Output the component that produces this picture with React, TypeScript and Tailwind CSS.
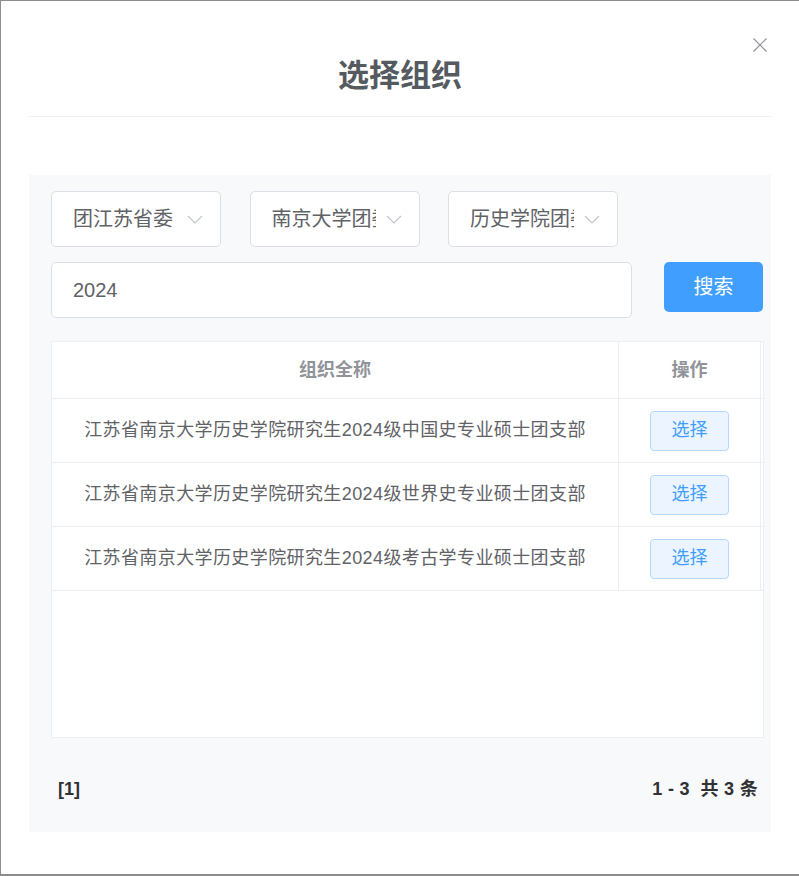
import React from "react";

const font = { fontFamily: '"Liberation Sans", "Noto Sans CJK SC", sans-serif' };

function Chevron() {
  return (
    <svg width="16" height="9" viewBox="0 0 16 9" className="shrink-0">
      <polyline points="1,1 8,8 15,1" fill="none" stroke="#c0c4cc" strokeWidth="1.1" />
    </svg>
  );
}

function Select({ label }: { label: string }) {
  return (
    <div className="w-[170px] h-[56px] bg-white border border-[#dcdfe6] rounded-[5px] flex items-center pl-[21px] pr-[17px]">
      <span className="w-[104px] overflow-hidden whitespace-nowrap text-[20px] text-[#606266] leading-[28px]">{label}</span>
      <span className="ml-auto flex items-center"><Chevron /></span>
    </div>
  );
}

const rows = [
  "江苏省南京大学历史学院研究生2024级中国史专业硕士团支部",
  "江苏省南京大学历史学院研究生2024级世界史专业硕士团支部",
  "江苏省南京大学历史学院研究生2024级考古学专业硕士团支部",
];

export default function App() {
  return (
    <div style={font} className="w-[799px] h-[876px] bg-white border-l border-t border-b-2 border-[#8c8c8c] relative flex flex-col">
      <button className="absolute left-[752px] top-[37px] w-[14px] h-[14px]">
        <svg width="14" height="14" viewBox="0 0 14 14">
          <line x1="0.5" y1="0.5" x2="13.5" y2="13.5" stroke="#909399" strokeWidth="1.2" />
          <line x1="13.5" y1="0.5" x2="0.5" y2="13.5" stroke="#909399" strokeWidth="1.2" />
        </svg>
      </button>
      <div className="pt-[52px] text-center">
        <h1 className="text-[31px] leading-[40px] font-bold text-[#555a60]" style={{ fontFamily: '"Noto Sans CJK SC", sans-serif' }}>选择组织</h1>
      </div>
      <div className="mx-[28px] mt-[23px] h-px bg-[#f0f1f3]" />
      <div className="mx-[28px] mt-[58px] h-[657px] bg-[#f8f9fb] pl-[22px] pr-[8px] pt-[16px]">
        <div className="flex gap-[28.5px]">
          <Select label="团江苏省委" />
          <Select label="南京大学团委" />
          <Select label="历史学院团委" />
        </div>
        <div className="mt-[15px] flex justify-between items-start">
          <div className="w-[581px] h-[56px] bg-white border border-[#dcdfe6] rounded-[5px] flex items-center pl-[21px] text-[20px] text-[#606266]">
            2024
          </div>
          <button className="w-[99px] h-[50px] bg-[#409eff] rounded-[5px] text-white text-[20px]">搜索</button>
        </div>
        <div className="mt-[23px] w-[713px] h-[397px] bg-white border border-[#ebeef5]">
          <div className="flex h-[57px] border-b border-[#ebeef5] text-[18px] font-bold text-[#909399]">
            <div className="w-[567px] border-r border-[#ebeef5] flex items-center justify-center">组织全称</div>
            <div className="w-[142px] border-r border-[#ebeef5] flex items-center justify-center">操作</div>
          </div>
          {rows.map((r) => (
            <div key={r} className="flex h-[64px] border-b border-[#ebeef5] text-[18px] text-[#606266]">
              <div className="w-[567px] border-r border-[#ebeef5] flex items-center justify-center tracking-[0.4px]">{r}</div>
              <div className="w-[142px] border-r border-[#ebeef5] flex items-center justify-center">
                <button className="w-[79px] h-[40px] bg-[#ecf5ff] border border-[#b3d8ff] rounded-[4px] text-[#409eff] text-[18px]">选择</button>
              </div>
            </div>
          ))}
        </div>
        <div className="flex justify-between pl-[7px] pr-[5px] pt-[41px] text-[18px] leading-[20px] font-bold text-[#303133]">
          <span>[1]</span>
          <span className="whitespace-pre tracking-[0.3px]">1 - 3  共 3 条</span>
        </div>
      </div>
    </div>
  );
}
